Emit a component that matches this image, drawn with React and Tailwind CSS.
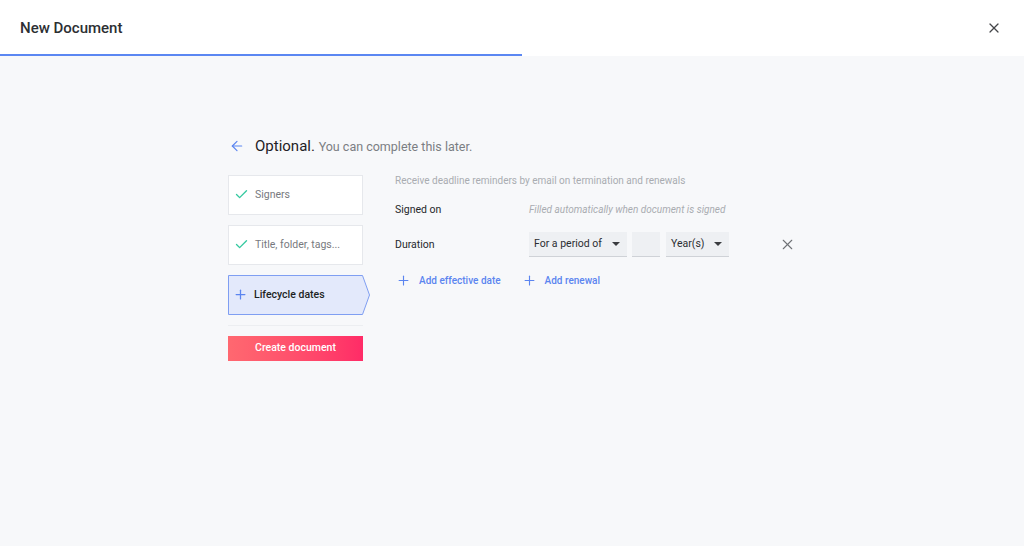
import { ArrowLeft, Check, Plus, X } from "lucide-react";

function StepCard({ label }) {
  return (
    <div className="flex h-[40px] w-[135px] items-center gap-[6px] border border-[#e6e8ec] bg-white px-[5px]">
      <Check size={15} strokeWidth={2.2} className="text-[#35c9a0]" />
      <span className="text-[10.5px] text-[#77797e]">{label}</span>
    </div>
  );
}

function ActiveCard({ label }) {
  return (
    <div className="relative h-[40px] w-[135px]">
      <svg className="absolute left-0 top-0" width="144" height="40" viewBox="0 0 144 40">
        <polygon
          points="0.5,0.5 134.5,0.5 141.5,20 134.5,39.5 0.5,39.5"
          fill="#e3e9fb"
          stroke="#7f9ef2"
          strokeWidth="1"
        />
      </svg>
      <div className="relative flex h-full items-center gap-[6px] px-[5px]">
        <Plus size={15} strokeWidth={2} className="text-[#5b85f0]" />
        <span className="text-[10.5px] font-medium text-[#1d1f23]">{label}</span>
      </div>
    </div>
  );
}

function Select({ value, className }) {
  return (
    <div
      className={
        "flex h-[25px] items-center justify-between border-b border-[#cfd2d7] bg-[#eef0f3] pl-[5px] pr-[7px] text-[10.5px] text-[#2b2d31] " +
        className
      }
    >
      <span>{value}</span>
      <svg width="8" height="4" viewBox="0 0 8 4">
        <polygon points="0,0 8,0 4,4" fill="#3a3c40" />
      </svg>
    </div>
  );
}

export default function App() {
  return (
    <div
      className="flex h-[546px] w-[1024px] flex-col bg-[#f7f8fa]"
      style={{ fontFamily: "Roboto, 'Liberation Sans', sans-serif" }}
    >
      <header className="bg-white">
        <div className="flex h-[54px] items-center justify-between pl-[20px] pr-[22px] pt-[2px]">
          <h1 className="text-[15px] font-medium text-[#2d2f33]">New Document</h1>
          <X size={16} strokeWidth={1.8} className="text-[#444649]" />
        </div>
        <div className="h-[2px] w-[522px] bg-[#5b87f2]" />
      </header>

      <main className="flex flex-col pl-[228px] pt-[79px]">
        <div className="flex items-center gap-[10px]">
          <ArrowLeft size={16} strokeWidth={1.8} className="ml-[1px] text-[#5b85f0]" />
          <p className="text-[15px] text-[#1f2125]">
            Optional. <span className="text-[12.5px] text-[#7b7e83]">You can complete this later.</span>
          </p>
        </div>

        <div className="mt-[17px] flex">
          <div className="flex w-[135px] flex-col">
            <div className="flex flex-col gap-[10px]">
              <StepCard label="Signers" />
              <StepCard label="Title, folder, tags..." />
              <ActiveCard label="Lifecycle dates" />
            </div>
            <div className="mt-[10px] h-px bg-[#eceef1]" />
            <button className="mt-[10px] h-[25px] w-full bg-gradient-to-r from-[#ff6870] to-[#ff2b67] text-[10.5px] font-medium text-white">
              Create document
            </button>
          </div>

          <div className="ml-[32px] -mt-[2px] flex flex-col text-[10.5px]">
            <p className="text-[10px] text-[#a9acb1]">
              Receive deadline reminders by email on termination and renewals
            </p>
            <div className="mt-[14px] flex items-center">
              <span className="w-[134px] text-[#26282c]">Signed on</span>
              <span className="text-[10px] italic text-[#a9acb1]">Filled automatically when document is signed</span>
            </div>
            <div className="mt-[15px] flex items-center">
              <span className="w-[134px] text-[#26282c]">Duration</span>
              <Select value="For a period of" className="w-[98px]" />
              <div className="ml-[5px] h-[25px] w-[28px] border-b border-[#cfd2d7] bg-[#eef0f3]" />
              <Select value="Year(s)" className="ml-[6px] w-[63px]" />
              <X size={17} strokeWidth={1.5} className="ml-[50px] text-[#6f7276]" />
            </div>
            <div className="mt-[16px] flex items-center text-[10px] text-[#5b85f0]">
              <Plus size={15} strokeWidth={1.8} className="ml-[1px]" />
              <span className="ml-[8px] font-medium">Add effective date</span>
              <Plus size={15} strokeWidth={1.8} className="ml-[21px]" />
              <span className="ml-[8px] font-medium">Add renewal</span>
            </div>
          </div>
        </div>
      </main>
    </div>
  );
}
